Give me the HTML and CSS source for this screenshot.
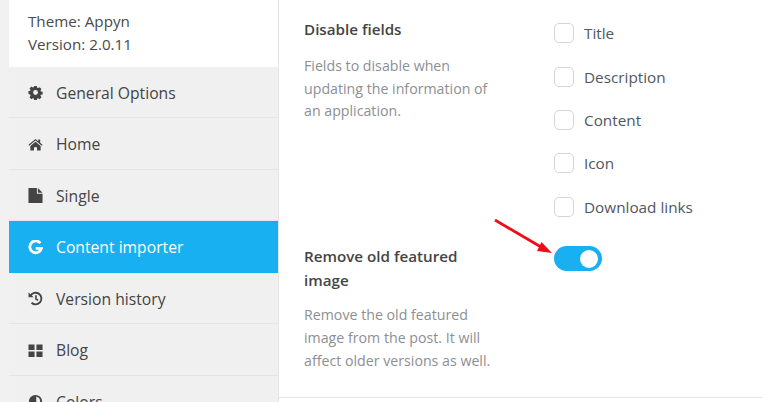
FILE: index.html
```html
<!DOCTYPE html>
<html lang="en">
<head>
    <meta charset="UTF-8">
    <title>Appyn options</title>
    <link rel="stylesheet" href="styles.css">
</head>
<body>
    <div class="panel">
        <aside class="sidebar">
            <div class="theme-info">
                <div><b>Theme:</b> Appyn</div>
                <div><b>Version:</b> 2.0.11</div>
            </div>
            <nav class="menu">
                <a class="menu-item">
                    <svg class="menu-icon" viewBox="0 0 16 16"><path fill-rule="evenodd" d="M6.6 1h2.8l.4 1.9 1 .4 1.6-1 2 2-1.1 1.6.4 1 1.9.4v2.8l-1.9.4-.4 1 1.1 1.6-2 2-1.6-1.1-1 .4-.4 1.9H6.600l-.4-1.900-1-.4-1.600 1.100-2-2 1.100-1.600-.4-1L.4 9.400V6.600l1.900-.4.4-1L1.600 3.600l2-2 1.600 1 1-.4zM8 5.400a2.600 2.600 0 1 0 0 5.200 2.600 2.600 0 0 0 0-5.200z"/></svg>
                    General Options
                </a>
                <a class="menu-item">
                    <svg class="menu-icon" viewBox="0 0 16 16"><path d="M8 2 .5 8.300l.8.9L8 3.700l6.700 5.500.8-.9L13 6.200V2.600h-2v2L8 2z"/><path d="M8 5 2.500 9.500V14.500h3.900v-3.600h3.200v3.600h3.900V9.500z"/></svg>
                    Home
                </a>
                <a class="menu-item">
                    <svg class="menu-icon" viewBox="0 0 16 16"><path d="M.5 0H9.500v6h6v10H.5z"/><path d="M10.500 0l5 5h-5z"/></svg>
                    Single
                </a>
                <a class="menu-item active">
                    <svg class="menu-icon" viewBox="0 0 16 16"><path fill="none" stroke="currentColor" stroke-width="3" d="M13.200 3.400A6.300 6.300 0 1 0 14.300 9H8.200"/></svg>
                    Content importer
                </a>
                <a class="menu-item">
                    <svg class="menu-icon" viewBox="0 0 16 16"><path fill="none" stroke="currentColor" stroke-width="2" d="M2.600 5.200A6.200 6.200 0 1 1 3.800 12.500"/><path d="M.6 1.500 6 6.700H.6z"/><path fill="none" stroke="currentColor" stroke-width="1.700" d="M8.500 4.500V8.500l2.300 1.500"/></svg>
                    Version history
                </a>
                <a class="menu-item">
                    <svg class="menu-icon" viewBox="0 0 16 16"><path d="M.5 1.500h6.500v6H.5zM9 1.500h6.500v6H9zM.5 9h6.500v6H.5zM9 9h6.500v6H9z"/></svg>
                    Blog
                </a>
                <a class="menu-item">
                    <svg class="menu-icon" viewBox="0 0 16 16"><path fill-rule="evenodd" d="M8 1a7 7 0 1 0 0 14A7 7 0 0 0 8 1zm.8 1.600v5.800l4 .4a5.500 5.500 0 0 0-4-6.200z"/></svg>
                    Colors
                </a>
            </nav>
        </aside>
        <main class="content">
            <div class="options">
                <section class="option">
                    <div class="option-text">
                        <h3>Disable fields</h3>
                        <p>Fields to disable when updating the information of an application.</p>
                    </div>
                    <div class="checks">
                        <label class="check"><span class="box"></span>Title</label>
                        <label class="check"><span class="box"></span>Description</label>
                        <label class="check"><span class="box"></span>Content</label>
                        <label class="check"><span class="box"></span>Icon</label>
                        <label class="check"><span class="box"></span>Download links</label>
                    </div>
                </section>
                <section class="option option-last">
                    <div class="option-text">
                        <h3>Remove old featured image</h3>
                        <p>Remove the old featured image from the post. It will affect older versions as well.</p>
                    </div>
                    <div class="toggle"><span class="knob"></span></div>
                </section>
            </div>
            <svg class="arrow" width="60" height="46" viewBox="0 0 60 46">
                <path fill="none" stroke="#f00d17" stroke-width="2.800" d="M1 1 47 28"/>
                <path fill="#f00d17" d="M58 34 43 32 47.500 23z"/>
            </svg>
        </main>
    </div>
</body>
</html>
```

FILE: styles.css
```css
html, body {
    height: 100%;
}
body {
    margin: 0;
    padding: 0;
    background-color: #f1f1f1;
    color: #444;
    font-family: "Open Sans", sans-serif;
    overflow: hidden;
}
.panel {
    display: flex;
    margin-left: 9px;
    height: 402px;
    background-color: #fff;
}
.sidebar {
    width: 269px;
    flex-shrink: 0;
    overflow: hidden;
}
.theme-info {
    height: 66.600px;
    box-sizing: border-box;
    padding: 10px 19px 0;
    line-height: 23px;
    font-size: 15.200px;
    color: #4a4a4a;
}
.theme-info b {
    font-weight: 500;
}
.menu {
    background-color: #f0f0f0;
}
.menu-item {
    display: flex;
    align-items: center;
    box-sizing: border-box;
    height: 51.500px;
    padding-top: 1.500px;
    padding-left: 19px;
    border-bottom: 1px solid #e5e5e5;
    font-weight: 500;
    font-size: 15.700px;
    color: #444;
}
.menu-item.active {
    background-color: #19b0f2;
    color: #fff;
    border-bottom-color: #19b0f2;
}
.menu-icon {
    width: 15px;
    height: 15px;
    margin-right: 13px;
    fill: currentColor;
    flex-shrink: 0;
}
.content {
    flex: 1;
    position: relative;
    border-left: 1px solid #e5e5e5;
}
.options {
    box-sizing: border-box;
    height: 398px;
    padding: 17px 0 0 25px;
    border-bottom: 1px solid #e5e5e5;
}
.option {
    display: flex;
}
.option-last {
    margin-top: 27.200px;
}
.option-text {
    width: 190px;
    margin-right: 60px;
    flex-shrink: 0;
}
.option-text h3 {
    margin: 0;
    font-size: 15.200px;
    font-weight: 600;
    line-height: 24px;
    color: #444;
}
.option-text p {
    margin: 14.200px 0 0;
    font-size: 14.200px;
    line-height: 22.600px;
    color: #8c8f94;
}
.option-last p {
    margin-top: 10.600px;
    line-height: 23px;
}
.checks {
    display: flex;
    flex-direction: column;
    gap: 23.400px;
    margin-top: 6.300px;
}
.check {
    display: flex;
    align-items: center;
    height: 20px;
    font-size: 15.300px;
    color: #50575e;
}
.box {
    width: 18px;
    height: 18px;
    margin-right: 10px;
    background-color: #fff;
    border: 1px solid #d5d5d9;
    border-radius: 5px;
}
.toggle {
    display: flex;
    justify-content: flex-end;
    align-items: center;
    width: 48px;
    height: 25px;
    margin-top: 2px;
    padding-right: 4px;
    box-sizing: border-box;
    background-color: #19b0f2;
    border-radius: 13px;
}
.knob {
    width: 18px;
    height: 18px;
    background-color: #fff;
    border-radius: 50%;
}
.arrow {
    position: absolute;
    left: 215px;
    top: 219px;
}
```
